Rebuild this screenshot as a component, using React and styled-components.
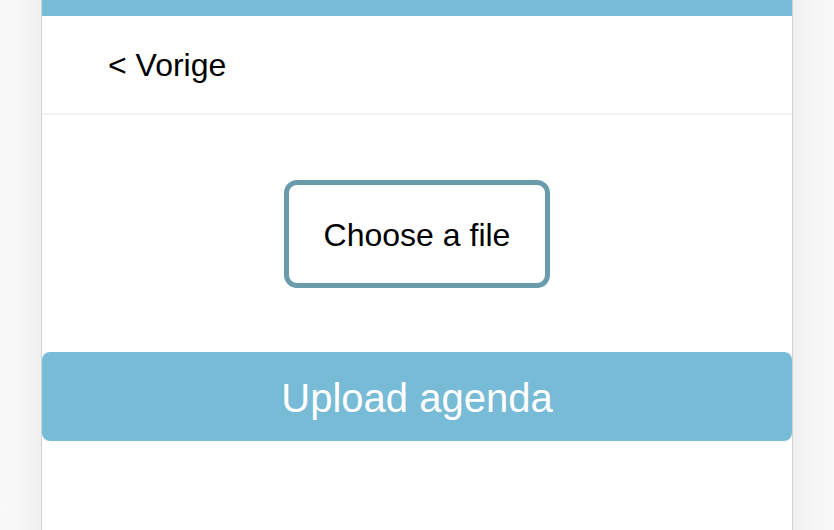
import React from "react";
import styled, { createGlobalStyle } from "styled-components";

const Global = createGlobalStyle`
  html, body { margin: 0; padding: 0; }
  body {
    background: linear-gradient(to right, #f9f9f9 0, #f6f6f6 20px, #f0f0f0 41px, #f0f0f0 793px, #f6f6f6 814px, #f9f9f9 834px);
    font-family: "Liberation Sans", Arial, sans-serif;
    color: #000;
  }
`;

const Page = styled.div`
  width: 750px;
  min-height: 530px;
  margin: 0 auto;
  background: #fff;
  border-left: 1px solid #d2d2d2;
  border-right: 1px solid #d2d2d2;
  display: flex;
  flex-direction: column;
`;

const TopBar = styled.div`
  height: 16px;
  background: #78bbd6;
`;

const Header = styled.div`
  height: 97px;
  display: flex;
  align-items: center;
  padding-left: 66px;
  border-bottom: 2px solid #f3f3f3;
`;

const BackLink = styled.a`
  font-size: 32px;
  color: #000;
  text-decoration: none;
  cursor: pointer;
  margin-top: 2px;
`;

const Body = styled.div`
  display: flex;
  flex-direction: column;
  align-items: center;
  padding-top: 65px;
  gap: 64px;
`;

const FileButton = styled.label`
  box-sizing: border-box;
  width: 266px;
  height: 108px;
  border: 5px solid #6a9bab;
  border-radius: 13px;
  display: flex;
  align-items: center;
  justify-content: center;
  font-size: 32px;
  padding-top: 3px;
  cursor: pointer;
`;

const UploadButton = styled.button`
  width: 100%;
  height: 89px;
  border: none;
  border-radius: 8px;
  background: #78bbd6;
  color: #fff;
  font-family: "Liberation Sans", Arial, sans-serif;
  font-size: 40px;
  cursor: pointer;
  padding: 4px 0 0;
`;

export default function App() {
  return (
    <>
      <Global />
      <Page>
        <TopBar />
        <Header>
          <BackLink>&lt; Vorige</BackLink>
        </Header>
        <Body>
          <FileButton>Choose a file</FileButton>
          <UploadButton>Upload agenda</UploadButton>
        </Body>
      </Page>
    </>
  );
}
